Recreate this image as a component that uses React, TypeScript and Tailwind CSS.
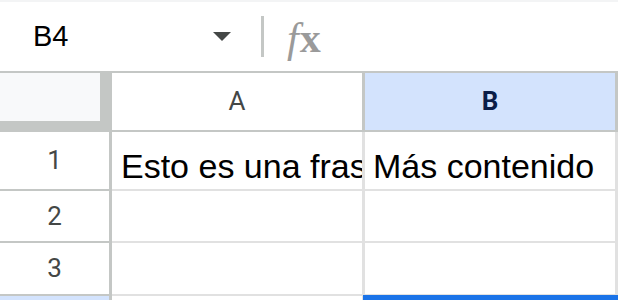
export default function App() {
  const line = 'border-[#c4c7c5]';
  const cell = 'w-[253px] border-r-[3px] border-b-2 border-[#e1e1e1]';
  const rowHead =
    'w-[112px] flex items-center justify-center border-r-[3px] border-b-2 border-[#c4c7c5] text-[26px] text-[#444746] font-["Roboto",Arial,sans-serif]';

  return (
    <div className="w-[618px] h-[300px] overflow-hidden bg-white font-['Liberation_Sans',Arial,sans-serif]">
      <div className="h-[2px] bg-[#f3f4f5]" />

      {/* formula bar */}
      <div className={`flex h-[71px] items-center border-b-2 ${line}`}>
        <div className="w-[200px] pl-[33px] text-[29px] text-black">B4</div>
        <div className="ml-[13px] h-0 w-0 border-x-[9px] border-t-[9px] border-x-transparent border-t-[#444746]" />
        <div className="ml-[30px] h-[41px] w-[3px] bg-[#c4c7c5]" />
        <div className="ml-[23px] mt-[2px] flex items-baseline gap-[1px] font-['Liberation_Serif',serif] text-[42px] leading-none text-[#9a9a9a]">
          <span className="italic">f</span>
          <span className="font-bold">x</span>
        </div>
      </div>

      {/* column headers */}
      <div className="flex h-[59px]">
        <div className="w-[112px] bg-[#c4c7c5]">
          <div className="h-[48px] w-[100px] bg-[#f8f9fa]" />
        </div>
        <div className={`w-[253px] flex items-center justify-center border-r-[3px] border-b-2 ${line} text-[26px] text-[#444746] font-['Roboto',Arial,sans-serif]`}>
          A
        </div>
        <div className={`w-[253px] flex items-center justify-center bg-[#d3e3fd] border-r-[3px] border-b-2 ${line} text-[26px] font-bold text-[#0b1d47] font-['Roboto',Arial,sans-serif]`}>
          B
        </div>
      </div>

      {/* row 1 */}
      <div className="flex h-[59px]">
        <div className={rowHead}>1</div>
        <div className={`${cell} flex items-end overflow-hidden pb-[4px] pl-[9px] text-[34px] leading-[38px] text-black whitespace-nowrap`}>
          Esto es una frase
        </div>
        <div className={`${cell} flex items-end overflow-hidden pb-[4px] pl-[8px] text-[34px] leading-[38px] text-black whitespace-nowrap`}>
          Más contenido
        </div>
      </div>

      {/* row 2 */}
      <div className="flex h-[52px]">
        <div className={rowHead}>2</div>
        <div className={cell} />
        <div className={cell} />
      </div>

      {/* row 3 */}
      <div className="flex h-[53px]">
        <div className={rowHead}>3</div>
        <div className={cell} />
        <div className={cell} />
      </div>

      {/* row 4 (selected) */}
      <div className="flex h-[40px]">
        <div className="w-[112px] border-r-[3px] border-[#c4c7c5] bg-[#d3e3fd]" />
        <div className="w-[253px] border-r-[3px] border-[#e1e1e1]" />
        <div className="relative w-[253px]">
          <div className="absolute -top-[1px] -left-[2px] right-0 h-[6px] bg-[#1a73e8]" />
        </div>
      </div>
    </div>
  );
}
